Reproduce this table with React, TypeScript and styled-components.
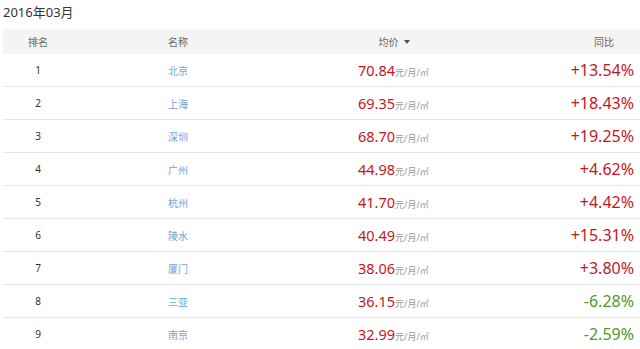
import React from "react";
import styled, { createGlobalStyle } from "styled-components";

const Global = createGlobalStyle`
  html, body { margin: 0; padding: 0; background: #fff; }
  body { font-family: "Noto Sans", "Noto Sans CJK SC", sans-serif; }
`;

const Page = styled.div`
  width: 640px;
  height: 349px;
  overflow: hidden;
  padding-left: 3px;
  box-sizing: border-box;
`;

const Title = styled.div`
  font-family: "Noto Sans", "Noto Sans CJK SC", sans-serif;
  font-size: 13px;
  line-height: 24px;
  color: #333;
  height: 29px;
`;

const cols = "70px 210px 222px 135px";

const HeaderRow = styled.div`
  display: grid;
  grid-template-columns: ${cols};
  height: 25px;
  align-items: center;
  background: #f4f4f4;
  font-family: "Noto Sans CJK SC", sans-serif;
  font-size: 10px;
  color: #666;
`;

const HeadCell = styled.div<{ $align?: string; $pr?: number }>`
  padding-right: ${(p) => p.$pr || 0}px;
  display: flex;
  justify-content: ${(p) => (p.$align === "right" ? "flex-end" : "center")};
  align-items: center;
  gap: 5px;
`;

const Caret = styled.span`
  width: 0;
  height: 0;
  border-left: 3.5px solid transparent;
  border-right: 3.5px solid transparent;
  border-top: 4px solid #555;
`;

const Row = styled.div`
  display: grid;
  grid-template-columns: ${cols};
  height: 32px;
  align-items: center;
  border-bottom: 1px solid #e6e6e6;
`;

const Rank = styled.div`
  text-align: center;
  font-family: "Noto Sans", sans-serif;
  font-size: 10px;
  color: #333;
`;

const Name = styled.div`
  text-align: center;
  font-family: "Noto Sans CJK SC", sans-serif;
  font-size: 10px;
  color: #6fa3de;
`;

const Price = styled.div`
  padding-left: 75px;
  white-space: nowrap;
`;

const PriceNum = styled.span`
  font-family: "Noto Sans", sans-serif;
  font-size: 14.5px;
  color: #c8161e;
`;

const Unit = styled.span`
  font-family: "Noto Sans", "Noto Sans CJK SC", sans-serif;
  font-size: 9px;
  color: #999;
`;

const Change = styled.div<{ $up: boolean }>`
  text-align: right;
  padding-right: 6px;
  font-family: "Noto Sans", sans-serif;
  font-size: 16px;
  color: ${(p) => (p.$up ? "#c8161e" : "#4e9a2c")};
`;

const data = [
  ["北京", "70.84", "+13.54%"],
  ["上海", "69.35", "+18.43%"],
  ["深圳", "68.70", "+19.25%"],
  ["广州", "44.98", "+4.62%"],
  ["杭州", "41.70", "+4.42%"],
  ["陵水", "40.49", "+15.31%"],
  ["厦门", "38.06", "+3.80%"],
  ["三亚", "36.15", "-6.28%"],
  ["南京", "32.99", "-2.59%"],
];

export default function App() {
  return (
    <Page>
      <Global />
      <Title>2016年03月</Title>
      <HeaderRow>
        <HeadCell>排名</HeadCell>
        <HeadCell>名称</HeadCell>
        <HeadCell>
          均价 <Caret />
        </HeadCell>
        <HeadCell $align="right" $pr={26}>
          同比
        </HeadCell>
      </HeaderRow>
      {data.map(([name, price, change], i) => (
        <Row key={name}>
          <Rank>{i + 1}</Rank>
          <Name>{name}</Name>
          <Price>
            <PriceNum>{price}</PriceNum>
            <Unit>元/月/㎡</Unit>
          </Price>
          <Change $up={change.startsWith("+")}>{change}</Change>
        </Row>
      ))}
    </Page>
  );
}
